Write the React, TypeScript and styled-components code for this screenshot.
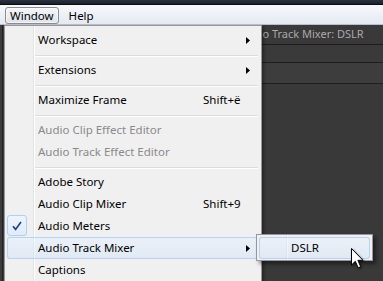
import React from "react";
import styled, { createGlobalStyle, css } from "styled-components";

const menuItems = [
  { label: "Workspace", sub: true },
  { sep: true },
  { label: "Extensions", sub: true },
  { sep: true },
  { label: "Maximize Frame", shortcut: "Shift+ë" },
  { sep: true },
  { label: "Audio Clip Effect Editor", disabled: true },
  { label: "Audio Track Effect Editor", disabled: true },
  { sep: true },
  { label: "Adobe Story" },
  { label: "Audio Clip Mixer", shortcut: "Shift+9" },
  { label: "Audio Meters", checked: true },
  { label: "Audio Track Mixer", sub: true, active: true },
  { label: "Captions" },
];

function App() {
  return (
    <Screen>
      <GlobalStyle />
      <TitleStrip />
      <MenuBar>
        <BarItem $open>Window</BarItem>
        <BarItem>Help</BarItem>
      </MenuBar>
      <Workspace>
        <LeftEdge />
        <Panel>
          <PanelHeader>Audio Track Mixer: DSLR</PanelHeader>
          <PanelRow $h={17} />
          <PanelRow $h={20} $tone="#3d3d3d" />
        </Panel>
      </Workspace>

      <DropMenu>
        {menuItems.map((item, i) =>
          item.sep ? (
            <Separator key={i} />
          ) : (
            <Row key={i} $active={item.active} $disabled={item.disabled}>
              <Gutter>
                {item.checked && (
                  <CheckBox>
                    <svg width="10" height="10" viewBox="0 0 10 10">
                      <path
                        d="M1 5.2 L3.6 8.4 L9 1"
                        fill="none"
                        stroke="#22418a"
                        strokeWidth="1.7"
                      />
                    </svg>
                  </CheckBox>
                )}
              </Gutter>
              <Label>{item.label}</Label>
              <Shortcut>{item.shortcut}</Shortcut>
              <Arrow>
                {item.sub && (
                  <svg width="4" height="7" viewBox="0 0 4 7">
                    <polygon points="0,0 4,3.5 0,7" fill="#000" />
                  </svg>
                )}
              </Arrow>
            </Row>
          )
        )}
      </DropMenu>

      <SubMenu>
        <SubRow>
          <Gutter />
          <Label>DSLR</Label>
        </SubRow>
      </SubMenu>

      <Cursor width="14" height="22" viewBox="0 0 14 22">
        <path
          d="M0.5 0.5 V17 L4.3 13.3 L7.2 19.8 L9.7 18.7 L6.9 12.3 H12 Z"
          fill="#fff"
          stroke="#000"
          strokeWidth="1"
          strokeLinejoin="round"
        />
      </Cursor>
    </Screen>
  );
}

export default App;

const GlobalStyle = createGlobalStyle`
  html, body {
    margin: 0;
    padding: 0;
    background: #3a3a3a;
  }
  body {
    font-family: "Noto Sans", "Open Sans", sans-serif;
    font-size: 11.5px;
  }
`;

const Screen = styled.div`
  position: relative;
  width: 383px;
  height: 281px;
  overflow: hidden;
  display: flex;
  flex-direction: column;
  background: #3a3a3a;
`;

const TitleStrip = styled.div`
  height: 4px;
  background: linear-gradient(#2a3242, #1a1f2a);
  border-bottom: 1px solid #0c0c0c;
`;

const MenuBar = styled.div`
  height: 20px;
  display: flex;
  align-items: flex-start;
  gap: 5px;
  padding: 2px 0 0 5px;
  box-sizing: border-box;
  background: linear-gradient(#f6f8fc, #e4eaf3);
  border-bottom: 1px solid #b9c0ca;
`;

const BarItem = styled.div<{ $open?: boolean }>`
  height: 17px;
  box-sizing: border-box;
  padding: 0 4px;
  display: flex;
  align-items: center;
  line-height: 1;
  color: #000;
  border: 1px solid transparent;
  border-radius: 3px;
  ${(p) =>
    p.$open &&
    css`
      border-color: #8a8c90;
      background: linear-gradient(#f4f6f9, #dfe3e9);
      box-shadow: inset 0 0 0 1px rgba(255, 255, 255, 0.6);
    `}
`;

const Workspace = styled.div`
  flex: 1;
  display: flex;
`;

const LeftEdge = styled.div`
  width: 4px;
  background: linear-gradient(
    to right,
    #3c3c3c 2px,
    #232323 2px,
    #232323 3px,
    #3c3c3c 3px
  );
`;

const Panel = styled.div`
  flex: 1;
  display: flex;
  flex-direction: column;
  background: #393939;
`;

const PanelHeader = styled.div`
  height: 20px;
  box-sizing: border-box;
  padding: 0 0 2px 235px;
  display: flex;
  align-items: center;
  font-size: 11px;
  background: #393939;
  color: #a9a9a9;
  border-bottom: 1px solid #1c1c1c;
  white-space: nowrap;
`;

const PanelRow = styled.div<{ $h: number; $tone?: string }>`
  height: ${(p) => p.$h}px;
  background: ${(p) => p.$tone || "#3a3a3a"};
  border-bottom: 1px solid #1e1e1e;
`;

const DropMenu = styled.div`
  position: absolute;
  top: 25px;
  left: 4px;
  width: 258px;
  height: 262px;
  box-sizing: border-box;
  padding-top: 3px;
  border: 1px solid #979797;
  background: linear-gradient(
    to right,
    #f0f0f0 28px,
    #e2e3e3 28px,
    #e2e3e3 29px,
    #ffffff 29px,
    #ffffff 30px,
    #f0f0f0 30px
  );
  box-shadow: 2px 2px 3px rgba(0, 0, 0, 0.35);
  display: flex;
  flex-direction: column;
`;

const Row = styled.div<{ $active?: boolean; $disabled?: boolean }>`
  height: 22px;
  box-sizing: border-box;
  padding-bottom: 2px;
  flex-shrink: 0;
  margin: 0 2px;
  display: grid;
  grid-template-columns: 26px 1fr 43px 13px;
  align-items: center;
  border-radius: 3px;
  white-space: nowrap;
  color: ${(p) => (p.$disabled ? "#8a8a8a" : "#000")};
  ${(p) =>
    p.$active &&
    css`
      background: linear-gradient(
        rgba(232, 242, 254, 0.55),
        rgba(200, 222, 250, 0.4)
      );
      box-shadow: inset 0 0 0 1px #b4d3f5;
    `}
`;

const Gutter = styled.div`
  height: 100%;
  display: flex;
  align-items: flex-start;
`;

const CheckBox = styled.div`
  width: 20px;
  height: 21px;
  box-sizing: border-box;
  border: 1px solid #aecff7;
  border-radius: 3px;
  background: linear-gradient(#eef4fc, #e1ebf8);
  display: flex;
  align-items: center;
  justify-content: center;
`;

const Label = styled.div`
  padding-left: 5px;
`;

const Shortcut = styled.div`
  color: #000;
`;

const Arrow = styled.div`
  display: flex;
  align-items: center;
  padding-top: 2px;
`;

const Separator = styled.div`
  height: 8px;
  flex-shrink: 0;
  margin: 0 3px 0 30px;
  display: flex;
  align-items: center;
  &::before {
    content: "";
    flex: 1;
    height: 1px;
    background: #dcdcdc;
    box-shadow: 0 1px 0 #ffffff;
  }
`;

const SubMenu = styled.div`
  position: absolute;
  top: 234px;
  left: 256px;
  width: 117px;
  box-sizing: border-box;
  padding: 2px 0 1px;
  border: 1px solid #979797;
  background: linear-gradient(
    to right,
    #f0f0f0 29px,
    #e2e3e3 29px,
    #e2e3e3 30px,
    #ffffff 30px,
    #ffffff 31px,
    #f0f0f0 31px
  );
  box-shadow: 3px 3px 4px rgba(0, 0, 0, 0.45);
`;

const SubRow = styled.div`
  height: 22px;
  box-sizing: border-box;
  padding-bottom: 2px;
  margin: 0 2px;
  display: grid;
  grid-template-columns: 27px 1fr;
  align-items: center;
  border-radius: 3px;
  color: #000;
  background: linear-gradient(
    rgba(232, 242, 254, 0.55),
    rgba(200, 222, 250, 0.4)
  );
  box-shadow: inset 0 0 0 1px #b4d3f5;
`;

const Cursor = styled.svg`
  position: absolute;
  left: 351px;
  top: 248px;
  filter: drop-shadow(1px 1px 1px rgba(0, 0, 0, 0.5));
`;
